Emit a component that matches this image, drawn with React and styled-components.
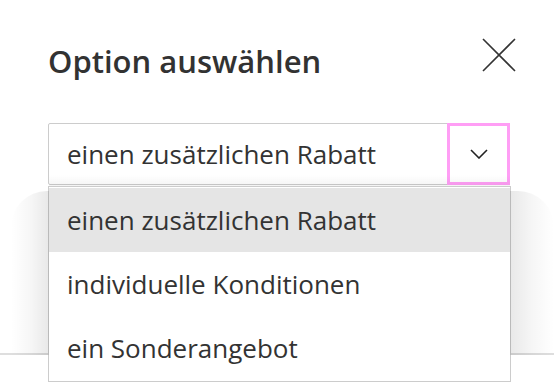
import React from "react";
import styled, { createGlobalStyle } from "styled-components";

const GlobalStyle = createGlobalStyle`
  html, body {
    margin: 0;
    padding: 0;
    background: #fff;
  }
  body {
    font-family: "Open Sans", "Noto Sans", sans-serif;
    color: #333;
  }
`;

const options = [
  "einen zusätzlichen Rabatt",
  "individuelle Konditionen",
  "ein Sonderangebot",
];

const App = () => {
  return (
    <Page>
      <GlobalStyle />
      <Dialog>
        <Header>
          <Title>Option auswählen</Title>
          <CloseButton aria-label="Schließen">
            <svg width="34" height="34" viewBox="0 0 34 34">
              <path d="M1 1 L33 33 M33 1 L1 33" stroke="#333" strokeWidth="1.6" fill="none" />
            </svg>
          </CloseButton>
        </Header>
        <SelectWrap>
          <Select>
            <Value>{options[0]}</Value>
            <Toggle aria-label="Öffnen">
              <svg width="18" height="10" viewBox="0 0 18 10">
                <path d="M1 1 L9 9 L17 1" stroke="#222" strokeWidth="1.6" fill="none" />
              </svg>
            </Toggle>
          </Select>
          <List>
            <SideShade />
            <TopShade />
            {options.map((o, i) => (
              <Item key={o} $active={i === 0}>
                {o}
              </Item>
            ))}
          </List>
        </SelectWrap>
      </Dialog>
    </Page>
  );
};

export default App;

const Page = styled.div`
  width: 554px;
  height: 383px;
  overflow: hidden;
  background: #fff;
`;

const Dialog = styled.div`
  box-sizing: border-box;
  width: 554px;
  height: 355px;
  padding: 38px 44px 0 48px;
  background: #fff;
  border-bottom: 2px solid #dedede;
`;

const Header = styled.div`
  display: flex;
  justify-content: space-between;
  align-items: flex-start;
  height: 85px;
`;

const Title = styled.h1`
  margin: 0;
  padding-top: 2px;
  font-size: 31px;
  font-weight: 600;
  line-height: 42px;
  color: #323232;
`;

const CloseButton = styled.button`
  border: none;
  background: none;
  padding: 0;
  margin: 0 -6px 0 0;
  width: 34px;
  height: 34px;
  display: flex;
  cursor: pointer;
`;

const SelectWrap = styled.div`
  position: relative;
`;

const Select = styled.div`
  display: flex;
  align-items: stretch;
  height: 62px;
  box-sizing: border-box;
  border: 1px solid #cccccc;
  border-radius: 2px;
  background: #fff;
`;

const Value = styled.div`
  flex: 1;
  display: flex;
  align-items: center;
  padding-left: 18px;
  font-size: 26px;
`;

const Toggle = styled.button`
  box-sizing: border-box;
  width: 63px;
  margin: -1px -1px -1px 0;
  border: 3px solid #ff9ef5;
  background: #fff;
  display: flex;
  align-items: center;
  justify-content: center;
  padding: 0;
  cursor: pointer;
`;

const List = styled.div`
  position: absolute;
  top: 100%;
  left: 0;
  right: -1px;
  z-index: 2;
  margin-top: 1px;
  padding: 1px 0;
  background: #fff;
  border: 1px solid #cccccc;
`;

// soft shade beside the list, ending at the dialog's bottom edge
const SideShade = styled.div`
  position: absolute;
  top: 4px;
  height: 164px;
  left: -38px;
  right: -44px;
  z-index: -1;
  pointer-events: none;
  border-radius: 36px 36px 0 0;
  background: linear-gradient(
    to right,
    rgba(0, 0, 0, 0) 0,
    rgba(0, 0, 0, 0.035) 20px,
    rgba(0, 0, 0, 0.09) 38px,
    rgba(0, 0, 0, 0) 38px,
    rgba(0, 0, 0, 0) calc(100% - 44px),
    rgba(0, 0, 0, 0.09) calc(100% - 44px),
    rgba(0, 0, 0, 0.035) calc(100% - 22px),
    rgba(0, 0, 0, 0) 100%
  );
`;

// faint shade over the bottom of the select box
const TopShade = styled.div`
  position: absolute;
  top: -12px;
  height: 11px;
  left: 0;
  right: 0;
  pointer-events: none;
  background: linear-gradient(to bottom, rgba(0, 0, 0, 0), rgba(0, 0, 0, 0.045));
`;

const Item = styled.div`
  height: 64px;
  display: flex;
  align-items: center;
  padding-left: 18px;
  font-size: 26px;
  background: ${(p) => (p.$active ? "#e5e5e5" : "#fff")};
`;
